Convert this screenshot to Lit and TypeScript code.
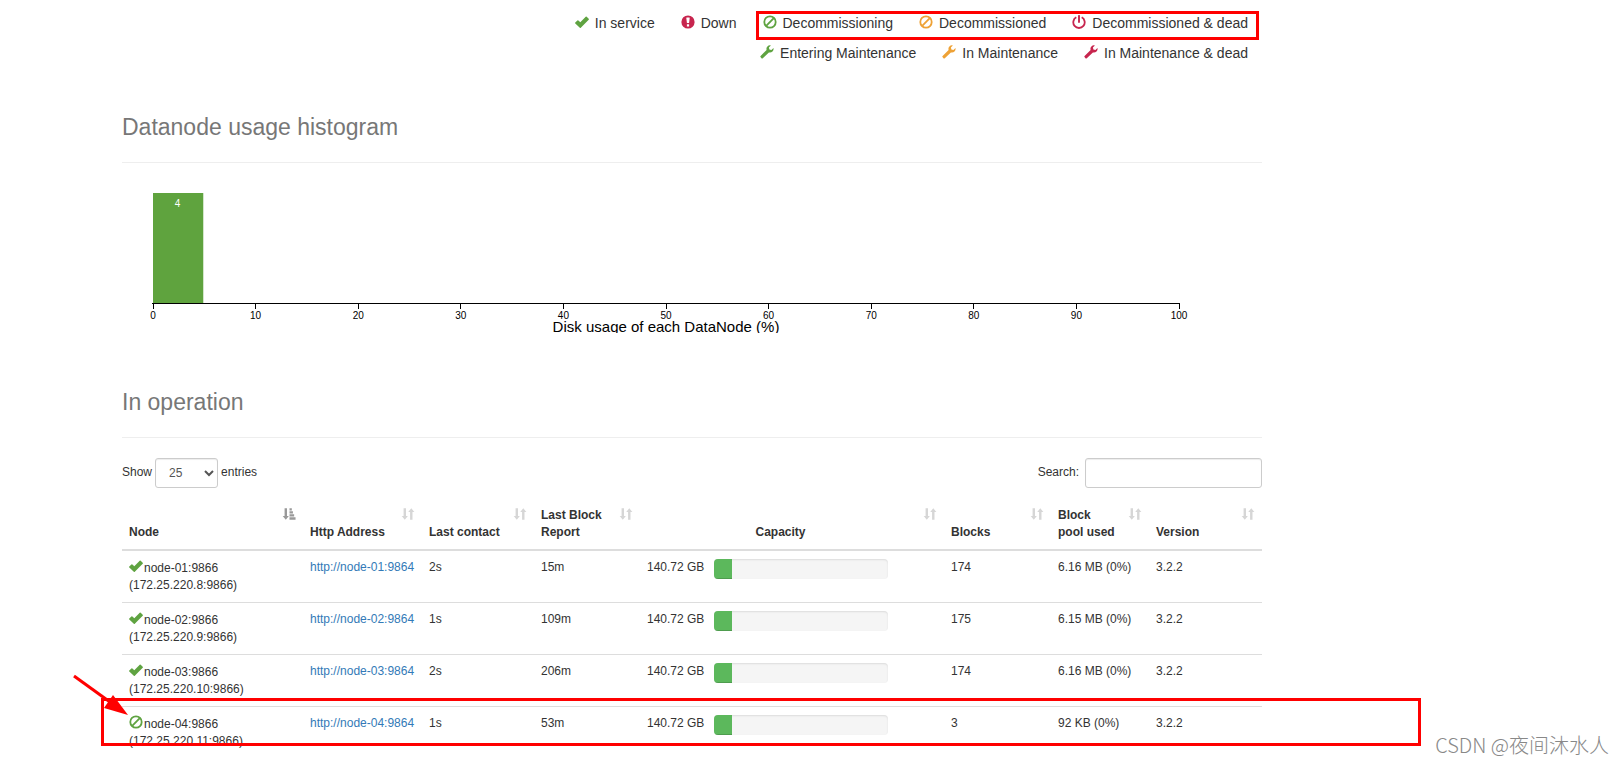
import { LitElement, html, svg, css } from "lit";
import { customElement, state } from "lit/decorators.js";

type IconName = "ok" | "down" | "ban" | "off" | "wrench" | "sort" | "sort-asc";

const shapes: Record<IconName, unknown> = {
  ok: svg`<path fill="currentColor" d="M.3 7.500 2.400 5.400Q2.900 4.900 3.400 5.400L5.300 7.300 10.700 1.700Q11.200 1.200 11.700 1.700L13.700 3.800Q14.200 4.300 13.700 4.800L5.800 12.700Q5.300 13.200 4.800 12.700L.3 8.500Q-.2 8 .3 7.500Z"/>`,
  down: svg`<circle cx="7" cy="7" r="6.6" fill="currentColor"/><path fill="#fff" d="M5.700 2.500h2.600q.5 0 .4.5l-.6 4.700q0 .4-.4.4H6.300q-.4 0-.4-.4L5.300 3q0-.5.4-.5ZM5.900 9.200h2.200v2.200H5.900Z"/>`,
  ban: svg`<circle cx="7" cy="7" r="5.7" fill="none" stroke="currentColor" stroke-width="1.800"/><path stroke="currentColor" stroke-width="1.900" d="M3.200 10.800 10.800 3.200"/>`,
  off: svg`<path fill="none" stroke="currentColor" stroke-width="1.800" d="M4.300 2.300A5.700 5.700 0 1 0 9.700 2.300"/><path stroke="currentColor" stroke-width="1.900" stroke-linecap="round" d="M7 .9V7"/>`,
  wrench: svg`<path fill="currentColor" d="M10.900.4Q8.800-.1 7.400 1.400 6 2.900 6.600 4.900L.6 10.900Q.1 11.500.5 12.100L1.700 13.400Q2.200 13.800 2.800 13.300L8.900 7.400Q10.900 8 12.500 6.500 13.900 5.100 13.500 3.100L11.400 5.100 9.400 4.600 8.900 2.400Z"/>`,
  sort: svg`<path fill="currentColor" d="M1.700.800h2.600v8.400h2L3 13.200-.3 9.200h2ZM8.700 13.200V4.800h-2l3.300-4 3.300 4h-2v8.400Z"/>`,
  "sort-asc": svg`<path fill="currentColor" d="M1.700.800h2.600v8.400h2L3 13.200-.3 9.200h2ZM7 .800h2.500v2.400H7ZM7 4h3.700v2.500H7ZM7 7.300h5v2.500H7ZM7 10.600h6.500v2.600H7Z"/>`,
};

const icon = (name: IconName, tone: string) => html`
  <svg class="icon ${tone}" viewBox="0 0 14 14" aria-hidden="true">${shapes[name]}</svg>`;

interface Status { icon: IconName; tone: string; label: string }

const legend: Status[][] = [
  [
    { icon: "ok", tone: "green", label: "In service" },
    { icon: "down", tone: "red", label: "Down" },
    { icon: "ban", tone: "green", label: "Decommissioning" },
    { icon: "ban", tone: "orange", label: "Decommissioned" },
    { icon: "off", tone: "red", label: "Decommissioned & dead" },
  ],
  [
    { icon: "wrench", tone: "green", label: "Entering Maintenance" },
    { icon: "wrench", tone: "orange", label: "In Maintenance" },
    { icon: "wrench", tone: "red", label: "In Maintenance & dead" },
  ],
];

interface DataNode {
  icon: IconName; name: string; ip: string; contact: string; report: string;
  capacity: string; used: number; blocks: number; pool: string; version: string;
}

const nodes: DataNode[] = [
  { icon: "ok", name: "node-01", ip: "172.25.220.8", contact: "2s", report: "15m", capacity: "140.72 GB", used: 10, blocks: 174, pool: "6.16 MB (0%)", version: "3.2.2" },
  { icon: "ok", name: "node-02", ip: "172.25.220.9", contact: "1s", report: "109m", capacity: "140.72 GB", used: 10, blocks: 175, pool: "6.15 MB (0%)", version: "3.2.2" },
  { icon: "ok", name: "node-03", ip: "172.25.220.10", contact: "2s", report: "206m", capacity: "140.72 GB", used: 10, blocks: 174, pool: "6.16 MB (0%)", version: "3.2.2" },
  { icon: "ban", name: "node-04", ip: "172.25.220.11", contact: "1s", report: "53m", capacity: "140.72 GB", used: 10, blocks: 3, pool: "92 KB (0%)", version: "3.2.2" },
];

const columns = [
  { key: "node", label: html`Node` },
  { key: "http", label: html`Http Address` },
  { key: "contact", label: html`Last contact` },
  { key: "report", label: html`Last Block<br>Report` },
  { key: "capacity", label: html`Capacity` },
  { key: "blocks", label: html`Blocks` },
  { key: "pool", label: html`Block<br>pool used` },
  { key: "version", label: html`Version` },
];

@customElement("usage-histogram")
export class UsageHistogram extends LitElement {
  static styles = css`
    :host { display: block; }
    .chart { display: block; width: 100%; height: 150px; overflow: hidden; font-family: "Liberation Sans", Arial, sans-serif; }
    .plot { overflow: visible; }
    .axis { stroke: #000; shape-rendering: crispEdges; }
    .bar { fill: #5fa33e; }
    .tick-label { font-size: 10px; text-anchor: middle; }
    .count { font-size: 10px; text-anchor: middle; fill: #fff; }
    .caption { font-size: 15px; text-anchor: middle; }
  `;

  render() {
    const ticks = Array.from({ length: 11 }, (_, i) => i * 10);
    return html`
      <svg class="chart" role="img" aria-label="Disk usage of each DataNode">
        <svg class="plot" x="31" y="10" width="90%" height="140">
          <rect class="bar" width="4.9%" height="110"></rect>
          <text class="count" x="2.4%" y="14">4</text>
          <line class="axis" x1="-1" x2="100%" y1="110.5" y2="110.5"></line>
          ${ticks.map((t) => svg`
            <line class="axis" x1="${t}%" x2="${t}%" y1="110" y2="116"></line>
            <text class="tick-label" x="${t}%" y="126">${t}</text>`)}
          <text class="caption" x="50%" y="139">Disk usage of each DataNode (%)</text>
        </svg>
      </svg>`;
  }
}

@customElement("app-root")
export class AppRoot extends LitElement {
  @state() private query = "";

  static styles = css`
    :host {
      display: block; position: relative; overflow: hidden; min-height: 100vh; box-sizing: border-box;
      background: #fff; color: #333;
      font: 12px/17px "Liberation Sans", Arial, sans-serif;
    }
    *, *::before, *::after { box-sizing: border-box; }
    .page { padding: 8px 362px 0 122px; }
    .icon { width: 14px; height: 14px; flex: none; }
    .green { color: #5fa341; }
    .red { color: #c7254e; }
    .orange { color: #eea236; }
    .legend { margin: 0; padding: 0 14px 0 0; list-style: none; display: flex; justify-content: flex-end; gap: 26px; font-size: 14px; line-height: 30px; }
    .legend li { display: flex; align-items: center; gap: 6px; white-space: nowrap; }
    .legend .icon { margin-bottom: 2px; }
    .title { margin: 0 0 20px; padding-bottom: 21px; border-bottom: 1px solid #eee; font-size: 23px; line-height: 27px; font-weight: 400; color: #777; }
    .usage { padding-top: 46px; }
    .operation { padding-top: 56px; }
    .controls { display: flex; justify-content: space-between; }
    .control { display: flex; align-items: center; }
    .length { gap: 3px; }
    .filter { gap: 6px; }
    .control .text { padding-bottom: 2px; }
    .field { height: 30px; border: 1px solid #ccc; border-radius: 3px; background: #fff; color: #555; font: inherit; padding: 5px 9px; box-shadow: inset 0 1px 1px rgba(0, 0, 0, .075); }
    .select { width: 63px; }
    .search { width: 177px; }
    .table { width: 100%; margin-top: 11px; table-layout: fixed; border-collapse: separate; border-spacing: 0; }
    .w-node { width: 181px; }
    .w-http { width: 119px; }
    .w-contact { width: 112px; }
    .w-report { width: 106px; }
    .w-capacity { width: 304px; }
    .w-blocks { width: 107px; }
    .w-pool { width: 98px; }
    .w-version { width: 113px; }
    .table th { position: relative; padding: 8px 30px 8px 7px; text-align: left; vertical-align: bottom; border-bottom: 2px solid #ddd; white-space: nowrap; }
    .table .h-capacity { text-align: center; }
    .sorter { position: absolute; top: 8px; right: 7px; padding: 0; border: 0; background: none; line-height: 0; color: #d6d6d6; cursor: pointer; }
    .sorter.active { color: #999; }
    .sorter .icon { width: 13px; height: 14px; overflow: visible; }
    .table td { padding: 8px 7px; vertical-align: top; white-space: nowrap; }
    .table tr + tr td { border-top: 1px solid #ddd; }
    .name { display: flex; align-items: flex-start; gap: 1px; line-height: 18px; }
    .link { color: #337ab7; text-decoration: none; }
    .capacity { display: flex; justify-content: flex-start; gap: 10px; }
    .progress { flex: none; width: 60%; height: 20px; overflow: hidden; border-radius: 4px; background: #f5f5f5; box-shadow: inset 0 1px 2px rgba(0, 0, 0, .1); }
    .fill { height: 100%; background: #5cb85c; box-shadow: inset 0 -1px 0 rgba(0, 0, 0, .15); }
    .mark { position: absolute; border: 3px solid #f00; pointer-events: none; }
    .mark-legend { left: 756px; top: 11px; width: 503px; height: 29px; }
    .mark-row { left: 101px; top: 698px; width: 1320px; height: 48px; }
    .arrow { position: absolute; left: 70px; top: 670px; width: 60px; height: 50px; pointer-events: none; }
    .watermark { position: absolute; right: 15px; bottom: 5px; font: 300 20px/30px "Noto Sans CJK SC", sans-serif; color: #888; white-space: nowrap; }
  `;

  private onSearch(e: Event) {
    this.query = (e.target as HTMLInputElement).value;
  }

  private row(n: DataNode) {
    return html`
      <tr>
        <td>
          <div class="name">${icon(n.icon, "green")}<span>${n.name}:9866</span></div>
          <div>(${n.ip}:9866)</div>
        </td>
        <td><a class="link" href="http://${n.name}:9864">http://${n.name}:9864</a></td>
        <td>${n.contact}</td>
        <td>${n.report}</td>
        <td>
          <div class="capacity">
            <span>${n.capacity}</span>
            <div class="progress"><div class="fill" style="width:${n.used}%"></div></div>
          </div>
        </td>
        <td>${n.blocks}</td>
        <td>${n.pool}</td>
        <td>${n.version}</td>
      </tr>`;
  }

  render() {
    const rows = nodes.filter((n) => `${n.name} ${n.ip}`.includes(this.query));
    return html`
      <main class="page">
        ${legend.map((line) => html`
          <ul class="legend">
            ${line.map((s) => html`<li>${icon(s.icon, s.tone)}<span>${s.label}</span></li>`)}
          </ul>`)}
        <section class="usage">
          <h1 class="title">Datanode usage histogram</h1>
          <usage-histogram></usage-histogram>
        </section>
        <section class="operation">
          <h1 class="title">In operation</h1>
          <div class="controls">
            <div class="control length">
              <label class="text" for="length">Show</label>
              <select class="field select" id="length">
                <option>10</option><option selected>25</option><option>50</option><option>100</option>
              </select>
              <span class="text">entries</span>
            </div>
            <div class="control filter">
              <label class="text" for="search">Search:</label>
              <input class="field search" id="search" type="search" @input=${this.onSearch}>
            </div>
          </div>
          <table class="table">
            <colgroup>${columns.map((c) => html`<col class="w-${c.key}">`)}</colgroup>
            <thead>
              <tr>
                ${columns.map((c, i) => html`
                  <th class="h-${c.key}" scope="col">${c.label}<button class="sorter ${i ? "" : "active"}" aria-label="Sort">${icon(i ? "sort" : "sort-asc", "")}</button></th>`)}
              </tr>
            </thead>
            <tbody>${rows.map((n) => this.row(n))}</tbody>
          </table>
        </section>
      </main>
      <div class="mark mark-legend"></div>
      <div class="mark mark-row"></div>
      <svg class="arrow" viewBox="0 0 60 50" aria-hidden="true">
        <path d="M4 6 40 32" stroke="#f00" stroke-width="3"/>
        <path d="M58 45 34 38 43 25Z" fill="#f00"/>
      </svg>
      <div class="watermark">CSDN @夜间沐水人</div>`;
  }
}
